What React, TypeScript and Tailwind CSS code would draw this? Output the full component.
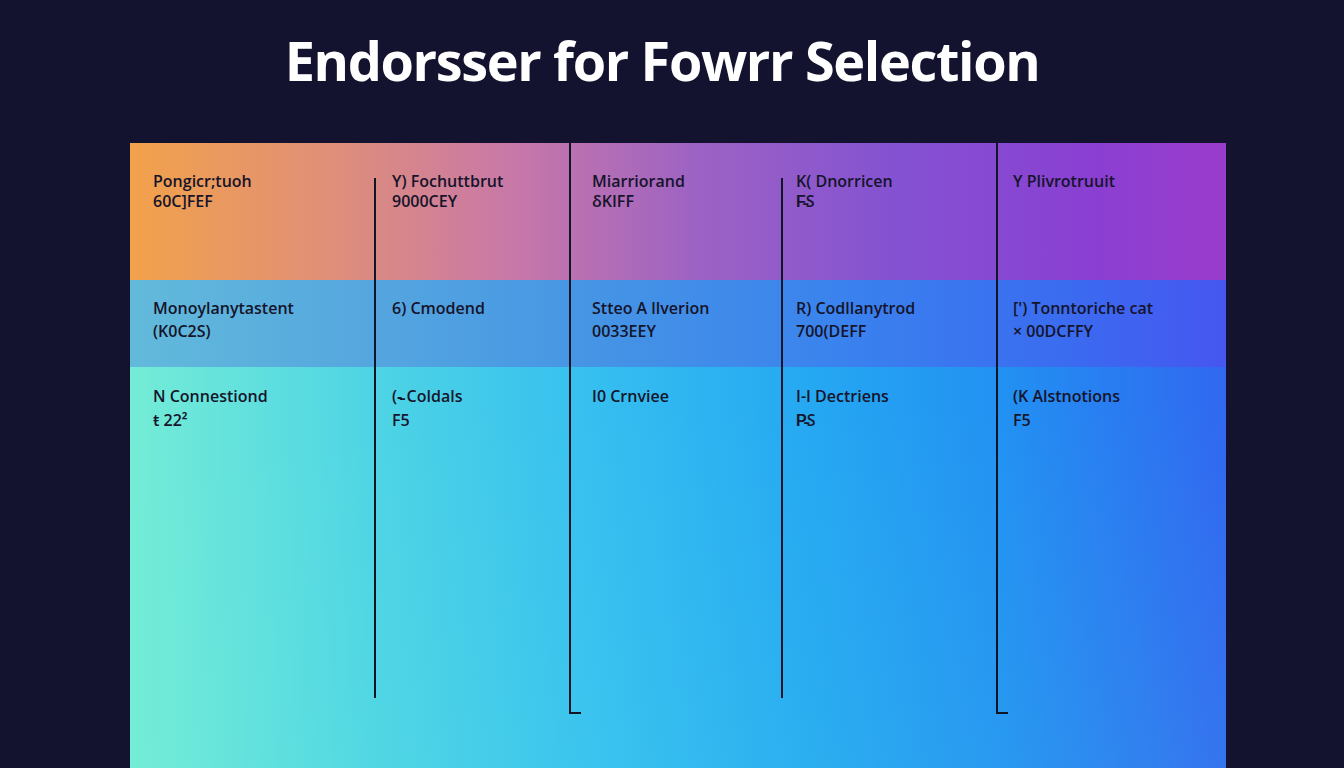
const rows = [
  {
    cls: "h-[137px] pt-[29px] bg-[linear-gradient(90deg,#f2a24a_0%,#e08f78_18%,#c878a8_35%,#9c62c4_52%,#8452d2_70%,#8a3fd2_88%,#9a3ccc_100%)]",
    gap: "gap-[2px]",
    cells: [
      ["Pongicr;tuoh", "60C]FEF"],
      ["Y) Fochuttbrut", "9000CEY"],
      ["Miarriorand", "\u03B4KIFF"],
      ["K( Dnorricen", "F\u0335S"],
      ["Y Plivrotruuit", ""],
    ],
  },
  {
    cls: "h-[87px] pt-[19px] bg-[linear-gradient(90deg,#62badb_0%,#56a8de_20%,#4492e6_45%,#3a82ee_65%,#3a6cf0_85%,#4656f0_100%)]",
    gap: "gap-[5px]",
    cells: [
      ["Monoylanytastent", "(K0C2S)"],
      ["6) Cmodend", ""],
      ["Stteo A llverion", "0033EEY"],
      ["R) Codllanytrod", "700(DEFF"],
      ["[') Tonntoriche cat", "\u00D7 00DCFFY"],
    ],
  },
  {
    cls: "flex-1 pt-[20px] bg-[linear-gradient(90deg,#74ecd6_0%,#4ed4e4_22%,#36bff0_42%,#25a8f2_62%,#2290f2_80%,#3068f0_100%)]",
    gap: "gap-[6px]",
    cells: [
      ["N Connestiond", "\u0167 22\u00B2"],
      ["(-\u0335 Coldals", "F5"],
      ["I0 Crnviee", ""],
      ["I-I Dectriens", "P\u0335S"],
      ["(K Alstnotions", "F5"],
    ],
  },
];

const cols = [
  "w-[244px] pl-[23px]",
  "w-[195px] pl-[18px]",
  "w-[212px] pl-[23px]",
  "w-[215px] pl-[15px]",
  "flex-1 pl-[17px]",
];

function Cell({ top, bottom, col, gap }: { top: string; bottom: string; col: string; gap: string }) {
  return (
    <div className={`${col} flex shrink-0 flex-col ${gap}`}>
      <span className="text-[16px] leading-[18px] font-semibold text-[#15142a]">{top}</span>
      {bottom && <span className="text-[16px] leading-[18px] font-semibold text-[#15142a]">{bottom}</span>}
    </div>
  );
}

export default function App() {
  return (
    <div
      className="flex h-[768px] w-full flex-col items-center overflow-hidden bg-[#14132f]"
      style={{ fontFamily: '"Open Sans", "Liberation Sans", sans-serif' }}
    >
      <h1 className="mt-[28px] mr-[20px] h-[115px] text-[54px] leading-[64px] font-bold tracking-[-0.025em] text-white">
        Endorsser for Fowrr Selection
      </h1>

      <div className="relative ml-[12px] flex w-[1096px] flex-1 flex-col">
        {rows.map((row, i) => (
          <div key={i} className={`flex ${row.cls}`}>
            {row.cells.map(([top, bottom], j) => (
              <Cell key={j} top={top} bottom={bottom} col={cols[j]} gap={row.gap} />
            ))}
          </div>
        ))}

        {/* soft glow toward the bottom of the table */}
        <div className="pointer-events-none absolute inset-0 bg-[linear-gradient(180deg,transparent_40%,rgba(120,255,220,0.08)_100%)]" />

        {/* column rules drawn over the rows */}
        <div className="pointer-events-none absolute inset-0 flex">
          <div className="w-[244px] shrink-0" />
          <div className="w-[195px] shrink-0 pt-[35px]">
            <div className="h-[520px] border-l-2 border-[#111626]" />
          </div>
          <div className="w-[212px] shrink-0">
            <div className="h-[571px] w-[12px] border-b-2 border-l-2 border-[#111626]" />
          </div>
          <div className="w-[215px] shrink-0 pt-[35px]">
            <div className="h-[520px] border-l-2 border-[#111626]" />
          </div>
          <div className="flex-1">
            <div className="h-[571px] w-[12px] border-b-2 border-l-2 border-[#111626]" />
          </div>
        </div>
      </div>
    </div>
  );
}
